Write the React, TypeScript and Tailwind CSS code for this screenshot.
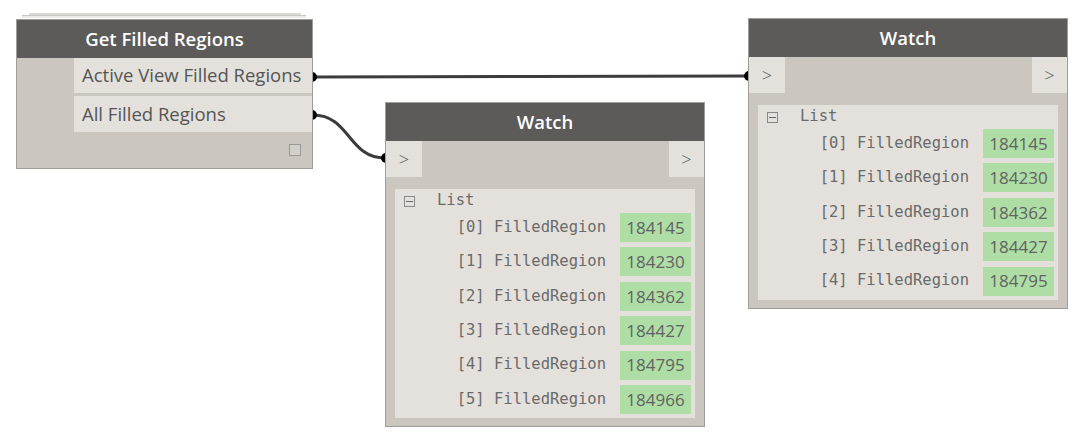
const sans = "font-['Open_Sans','Noto_Sans',sans-serif]";
const mono = "font-['DejaVu_Sans_Mono','Liberation_Mono',monospace]";

type WatchProps = {
  left: string;
  items: string[];
};

function Watch({ left, items }: WatchProps) {
  return (
    <div className={`absolute ${left} w-[320px] border border-[#9f9d99] bg-[#cbc7c0] ${sans}`}>
      <div className="flex h-[38px] items-center justify-center bg-[#5c5b59] text-[18.5px] font-semibold text-white">
        Watch
      </div>
      <div className="flex h-[36px] justify-between">
        <div className="flex w-[36px] items-center justify-center bg-[#e4e1dc] text-[18px] font-light text-[#555]">&gt;</div>
        <div className="flex w-[35px] items-center justify-center bg-[#e4e1dc] text-[18px] font-light text-[#555]">&gt;</div>
      </div>
      <div className="mx-[9px] mt-[12px] mb-[8px] bg-[#e4e1dc] pb-[4px] pr-[4px]">
        <div className="flex h-[24px] items-center pl-[9px]">
          <div className="relative h-[11px] w-[11px] border border-[#888]">
            <div className="absolute left-[1px] right-[1px] top-[4px] h-px bg-[#666]" />
          </div>
          <span className={`ml-[22px] text-[15.5px] text-[#6a6a6a] ${mono}`}>List</span>
        </div>
        <div className="flex flex-col gap-[5.4px]">
          {items.map((id, i) => (
            <div key={id} className="flex h-[29px] items-center justify-end">
              <span className={`mr-[14px] text-[15.5px] text-[#6a6a6a] ${mono}`}>
                [{i}] FilledRegion
              </span>
              <div className="flex h-[29px] w-[71px] items-center justify-center bg-[#aedea5] text-[17px] text-[#626262]">
                {id}
              </div>
            </div>
          ))}
        </div>
      </div>
    </div>
  );
}

export default function App() {
  const ids = ["184145", "184230", "184362", "184427", "184795", "184966"];
  return (
    <div className="relative h-[437px] w-[1082px] overflow-hidden bg-white">
      {/* wires sit under the nodes so the port dots look like half circles */}
      <svg className="absolute left-0 top-0" width="1082" height="437">
        <path d="M313 77 C 530 77, 530 76, 747 76" stroke="#3c3c3c" strokeWidth="3" fill="none" />
        <path d="M313 115 C 350 115, 348 158, 385 158" stroke="#3c3c3c" strokeWidth="3" fill="none" />
        <circle cx="312" cy="77" r="5" fill="#000" />
        <circle cx="312" cy="115" r="5" fill="#000" />
        <circle cx="749" cy="76" r="5" fill="#000" />
        <circle cx="386" cy="158" r="5" fill="#000" />
      </svg>

      {/* Get Filled Regions node */}
      <div className="absolute left-[29px] top-[13px] h-[2px] w-[272px] bg-[#d9d8d6]" />
      <div className="absolute left-[22px] top-[15px] h-[3px] w-[284px] border-t border-[#c9c8c5] bg-[#ebeae8]" />
      <div className={`absolute left-[16px] top-[19px] h-[150px] w-[297px] border border-[#9f9d99] bg-[#cbc7c0] ${sans}`}>
        <div className="flex h-[38px] items-center justify-center bg-[#5c5b59] text-[18.5px] font-semibold text-white">
          Get Filled Regions
        </div>
        <div className="ml-[57px] flex flex-col gap-[3px]">
          <div className="flex h-[35px] items-center bg-[#e4e1dc] pb-[2px] pl-[8px] text-[18.5px] text-[#555]">
            Active View Filled Regions
          </div>
          <div className="flex h-[36px] items-center bg-[#e4e1dc] pl-[8px] text-[18.5px] text-[#555]">
            All Filled Regions
          </div>
        </div>
        <div className="mr-[11px] mt-[12px] flex justify-end">
          <div className="h-[12px] w-[12px] border border-[#999] bg-[#d3d0ca]" />
        </div>
      </div>

      <Watch left="left-[385px] top-[102px]" items={ids} />
      <Watch left="left-[748px] top-[18px]" items={ids.slice(0, 5)} />
    </div>
  );
}
